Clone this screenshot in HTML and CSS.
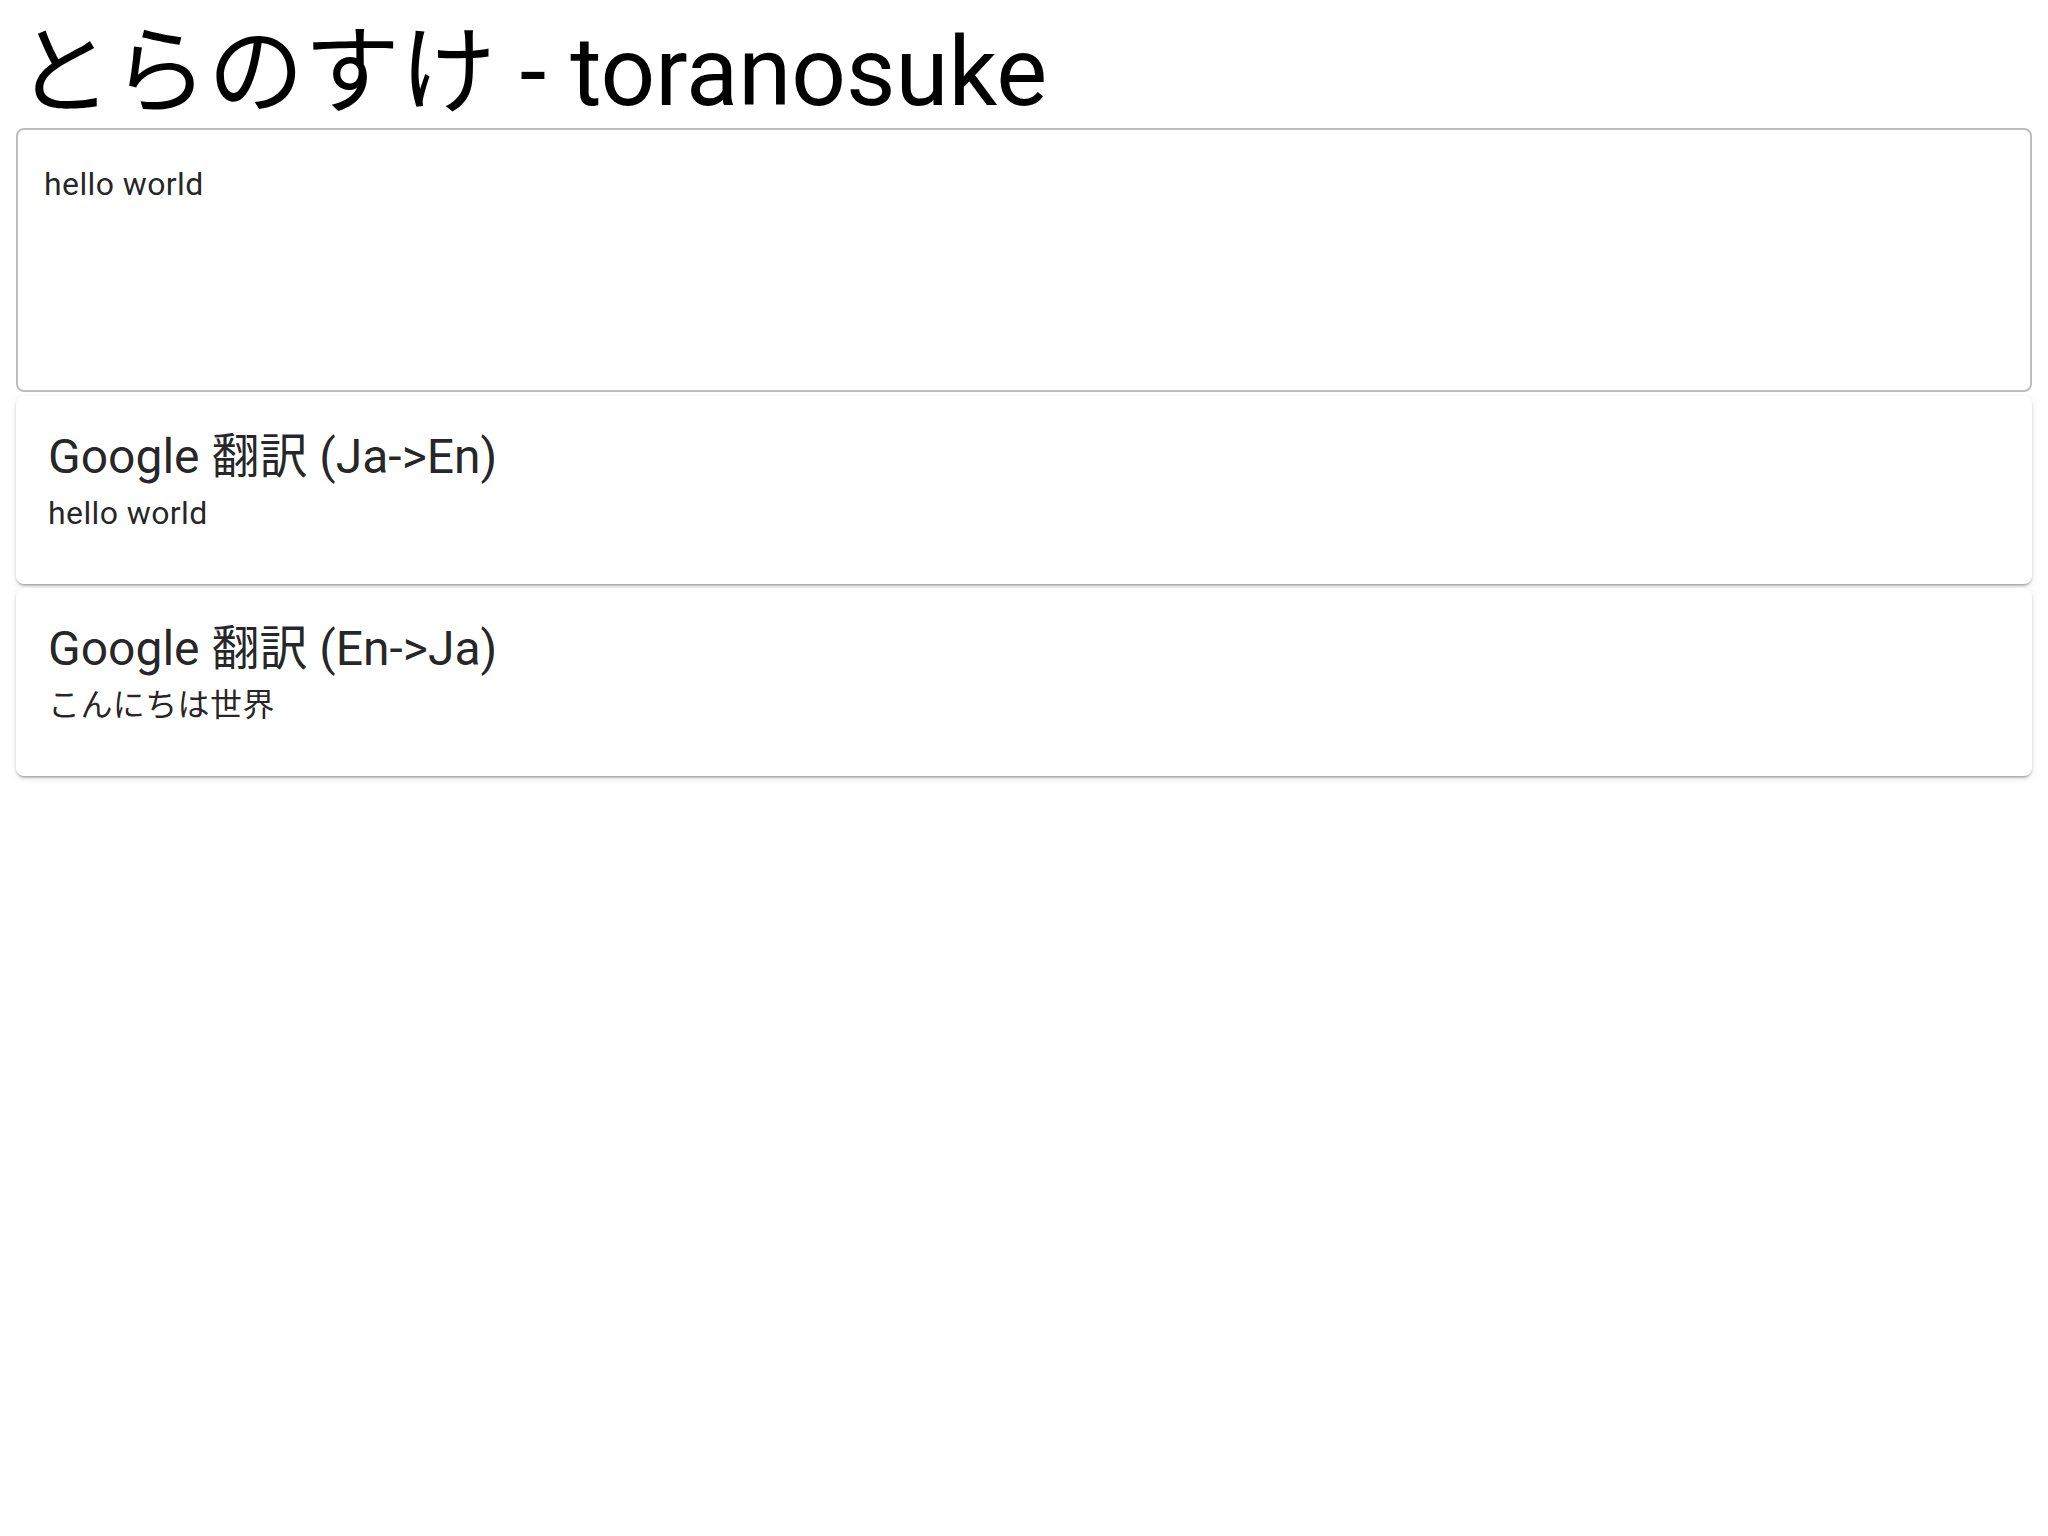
FILE: index.html
```html
<!DOCTYPE html>
<html lang="ja">
<head>
<meta charset="utf-8">
<title>とらのすけ - toranosuke</title>
<link rel="stylesheet" href="styles.css">
</head>
<body>
<div class="app">
  <h1 class="title">とらのすけ - toranosuke</h1>
  <textarea class="input">hello world</textarea>
  <div class="card">
    <div class="card-title">Google 翻訳 (Ja-&gt;En)</div>
    <div class="card-text">hello world</div>
  </div>
  <div class="card">
    <div class="card-title">Google 翻訳 (En-&gt;Ja)</div>
    <div class="card-text">こんにちは世界</div>
  </div>
</div>
</body>
</html>
```
FILE: styles.css
```css
html, body {
  margin: 0;
  padding: 0;
  background: #ffffff;
}
body {
  font-family: Roboto, "Noto Sans CJK JP", sans-serif;
  color: rgba(0, 0, 0, 0.87);
}
.app {
  padding: 16px;
  display: flex;
  flex-direction: column;
  gap: 4px;
}
.title {
  margin: 0 0 -4px 0;
  font-size: 96px;
  font-weight: 400;
  line-height: 112px;
  color: #000;
}
.input {
  box-sizing: border-box;
  width: 100%;
  height: 264px;
  margin: 0;
  padding: 34px 26px;
  border: 2px solid #bdbdbd;
  border-radius: 8px;
  font-family: Roboto, "Noto Sans CJK JP", sans-serif;
  font-size: 32px;
  line-height: 40px;
  letter-spacing: 0.4px;
  color: rgba(0, 0, 0, 0.87);
  resize: none;
  outline: none;
  display: block;
}
.card {
  background: #fff;
  border-radius: 8px;
  padding: 29px 32px 51px 32px;
  box-shadow: 0 3px 2px -2px rgba(0,0,0,0.2), 0 2px 2px 0 rgba(0,0,0,0.14), 0 2px 6px 0 rgba(0,0,0,0.12);
}
.card-title {
  font-size: 48px;
  line-height: 64px;
}
.card-text {
  margin-top: 4px;
  font-size: 32px;
  line-height: 40px;
  letter-spacing: 0.4px;
}
```
